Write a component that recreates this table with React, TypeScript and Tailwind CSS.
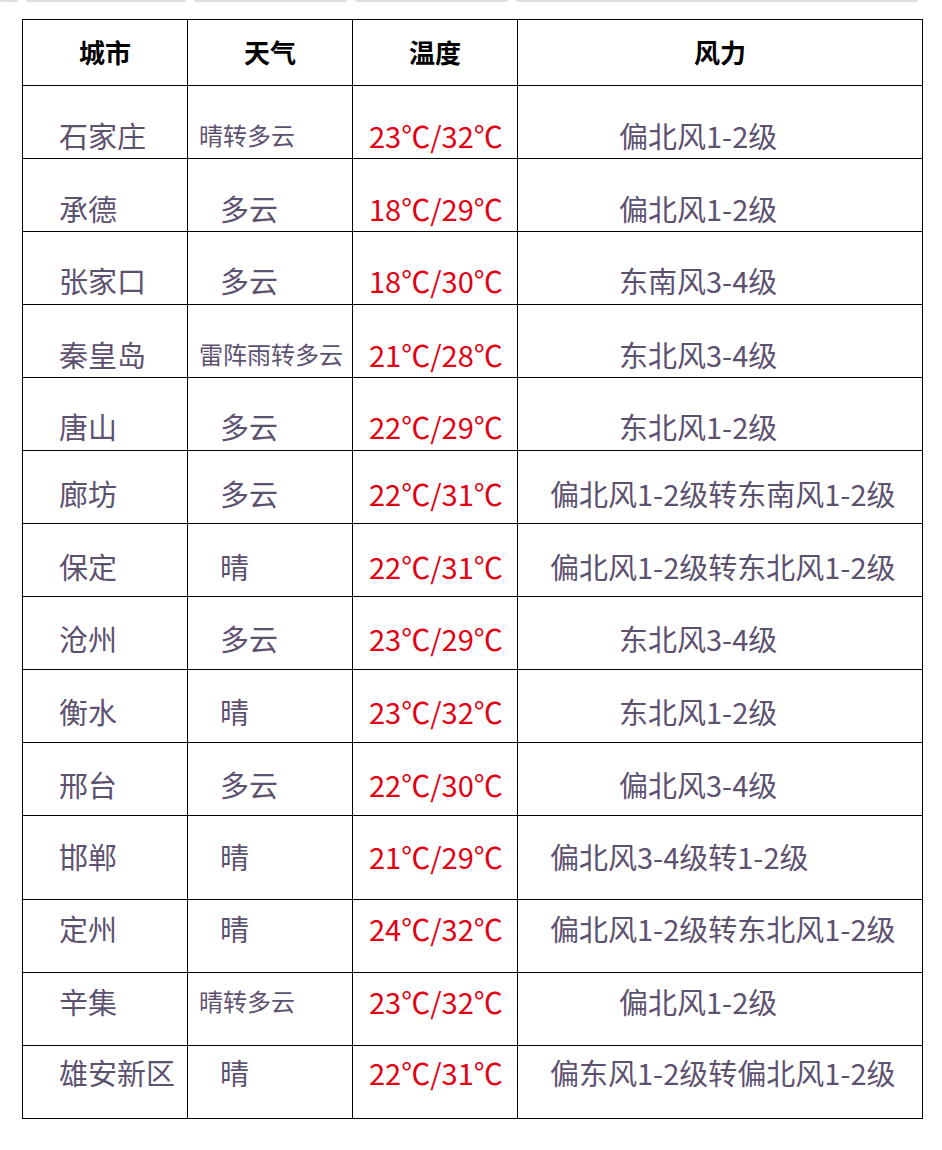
const rows = [
  { city: "石家庄", weather: "晴转多云", small: true, temp: "23℃/32℃", wind: "偏北风1-2级", long: false, h: "h-[73px]", pt: "pt-[31px]" },
  { city: "承德", weather: "多云", small: false, temp: "18℃/29℃", wind: "偏北风1-2级", long: false, h: "h-[73px]", pt: "pt-[31px]" },
  { city: "张家口", weather: "多云", small: false, temp: "18℃/30℃", wind: "东南风3-4级", long: false, h: "h-[73px]", pt: "pt-[30px]" },
  { city: "秦皇岛", weather: "雷阵雨转多云", small: true, temp: "21℃/28℃", wind: "东北风3-4级", long: false, h: "h-[73px]", pt: "pt-[31px]" },
  { city: "唐山", weather: "多云", small: false, temp: "22℃/29℃", wind: "东北风1-2级", long: false, h: "h-[73px]", pt: "pt-[30px]" },
  { city: "廊坊", weather: "多云", small: false, temp: "22℃/31℃", wind: "偏北风1-2级转东南风1-2级", long: true, h: "h-[73px]", pt: "pt-[24px]" },
  { city: "保定", weather: "晴", small: false, temp: "22℃/31℃", wind: "偏北风1-2级转东北风1-2级", long: true, h: "h-[73px]", pt: "pt-[24px]" },
  { city: "沧州", weather: "多云", small: false, temp: "23℃/29℃", wind: "东北风3-4级", long: false, h: "h-[73px]", pt: "pt-[23px]" },
  { city: "衡水", weather: "晴", small: false, temp: "23℃/32℃", wind: "东北风1-2级", long: false, h: "h-[73px]", pt: "pt-[23px]" },
  { city: "邢台", weather: "多云", small: false, temp: "22℃/30℃", wind: "偏北风3-4级", long: false, h: "h-[73px]", pt: "pt-[23px]" },
  { city: "邯郸", weather: "晴", small: false, temp: "21℃/29℃", wind: "偏北风3-4级转1-2级", long: true, h: "h-[84px]", pt: "pt-[22px]" },
  { city: "定州", weather: "晴", small: false, temp: "24℃/32℃", wind: "偏北风1-2级转东北风1-2级", long: true, h: "h-[73px]", pt: "pt-[10px]" },
  { city: "辛集", weather: "晴转多云", small: true, temp: "23℃/32℃", wind: "偏北风1-2级", long: false, h: "h-[73px]", pt: "pt-[10px]" },
  { city: "雄安新区", weather: "晴", small: false, temp: "22℃/31℃", wind: "偏东风1-2级转偏北风1-2级", long: true, h: "h-[73px]", pt: "pt-[8px]" },
];

const cell = "border-r border-b border-black overflow-hidden whitespace-nowrap";
const font = "font-['Noto_Sans_CJK_SC',sans-serif] leading-[36px]";
const big = "text-[29px]";
const grey = "text-[#5d5170]";

export default function App() {
  return (
    <div className="min-h-[1150px] w-[942px] bg-white">
      {/* cut-off tabs from the element above */}
      <div className="flex h-[2px] gap-[8px] pr-[24px]">
        <div className="w-[18px] rounded-b bg-[#dcdee0]" />
        <div className="w-[160px] rounded-b bg-[#dcdee0]" />
        <div className="w-[153px] rounded-b bg-[#dcdee0]" />
        <div className="w-[153px] rounded-b bg-[#dcdee0]" />
        <div className="flex-1 rounded-b bg-[#dcdee0]" />
      </div>

      <div className="ml-[22px] mt-[17px] grid w-[901px] grid-cols-[165px_165px_165px_405px] border-l border-t border-black">
        {["城市", "天气", "温度", "风力"].map((t) => (
          <div key={t} className={`${cell} flex h-[66px] justify-center pt-[17px]`}>
            <span className="font-['Liberation_Serif','Noto_Sans_CJK_SC',serif] text-[26px] font-bold leading-[36px] text-black">
              {t}
            </span>
          </div>
        ))}

        {rows.map((r) => (
          <div key={r.city} className="contents">
            <div className={`${cell} ${r.h} ${r.pt} ${font} ${big} ${grey} pl-[36px]`}>{r.city}</div>
            <div
              className={`${cell} ${r.h} ${r.pt} ${font} ${grey} ${
                r.small ? "pl-[11px] text-[24px]" : `pl-[32px] ${big}`
              }`}
            >
              {r.weather}
            </div>
            <div className={`${cell} ${r.h} ${r.pt} ${font} ${big} pl-[16px] text-[#e20014]`}>{r.temp}</div>
            <div className={`${cell} ${r.h} ${r.pt} ${font} ${big} ${grey} ${r.long ? "pl-[32px]" : "pl-[101px]"}`}>
              {r.wind}
            </div>
          </div>
        ))}
      </div>
    </div>
  );
}
